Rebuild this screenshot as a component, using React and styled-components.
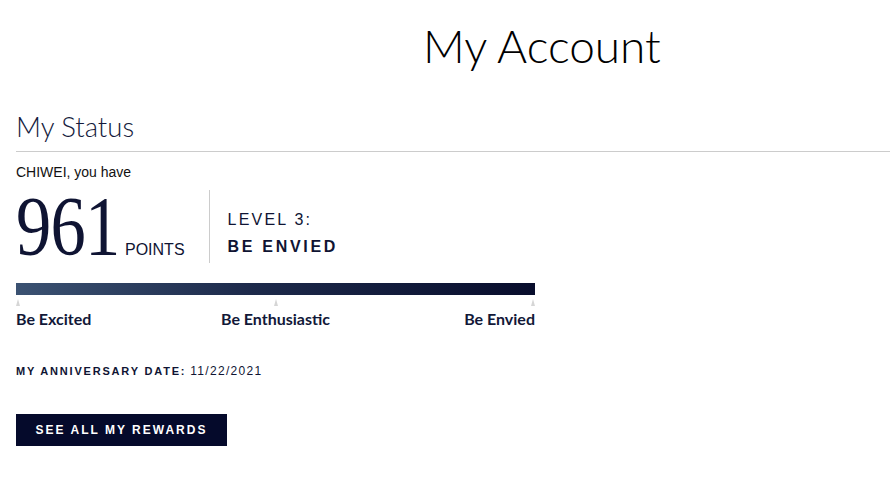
import React from "react";
import styled, { createGlobalStyle } from "styled-components";

const Global = createGlobalStyle`
  html, body { margin: 0; padding: 0; background: #fff; }
  body { font-family: "Liberation Sans", Arial, sans-serif; color: #0f1433; }
`;

const Page = styled.div`
  padding: 0 1px 40px 16px;
`;

const Title = styled.h1`
  margin: 23px 0 0 407px;
  font-family: Lato, "Open Sans", sans-serif;
  font-weight: 300;
  font-size: 46px;
  line-height: 46px;
  color: #000;
  letter-spacing: 0;
`;

const SectionHeading = styled.h2`
  margin: 44px 0 0;
  padding-bottom: 11px;
  border-bottom: 1px solid #cccccc;
  font-family: Lato, "Open Sans", sans-serif;
  font-weight: 300;
  font-size: 27.5px;
  line-height: 27px;
  color: #141a3c;
`;

const Greeting = styled.p`
  margin: 12px 0 0;
  font-size: 14px;
  line-height: 16px;
  color: #111;
`;

const PointsRow = styled.div`
  display: flex;
  margin-top: 10px;
  height: 73px;
`;

const PointsGroup = styled.div`
  display: flex;
  align-items: baseline;
  padding-right: 24px;
`;

const BigNumber = styled.span`
  display: inline-block;
  font-family: "Liberation Serif", "Times New Roman", serif;
  font-size: 84px;
  line-height: 73px;
  letter-spacing: -1px;
  color: #0f1433;
  transform: scaleX(0.84);
  transform-origin: left center;
  margin-right: -14px;
`;

const PointsLabel = styled.span`
  font-size: 16px;
  color: #0f1433;
`;

const LevelBlock = styled.div`
  border-left: 1px solid #cccccc;
  padding: 16px 0 0 18px;
  display: flex;
  flex-direction: column;
`;

const LevelLine = styled.span`
  font-size: 16px;
  line-height: 27px;
  font-weight: ${(p) => (p.$bold ? 700 : 400)};
  letter-spacing: ${(p) => (p.$bold ? "2.7px" : "2.2px")};
  color: #0f1433;
`;

const Track = styled.div`
  width: 519px;
  margin-top: 20px;
`;

const Bar = styled.div`
  height: 12px;
  background: linear-gradient(90deg, #3b5272 0%, #1d2a4b 45%, #080d2c 100%);
`;

const Milestones = styled.div`
  display: grid;
  grid-template-columns: 1fr 1fr 1fr;
  margin-top: 4px;
`;

const Milestone = styled.div`
  display: flex;
  flex-direction: column;
  align-items: ${(p) => p.$align};
`;

const Tick = styled.span`
  width: 0;
  height: 0;
  border-left: 2px solid transparent;
  border-right: 2px solid transparent;
  border-bottom: 7px solid #d6d6d6;
`;

const MilestoneLabel = styled.span`
  font-family: Lato, "Open Sans", sans-serif;
  font-weight: 700;
  font-size: 16px;
  line-height: 20px;
  margin-top: 3px;
  color: #121838;
  white-space: nowrap;
`;

const Anniversary = styled.p`
  margin: 35px 0 0;
  font-size: 11px;
  line-height: 14px;
  color: #0f1433;
`;

const AnnivLabel = styled.span`
  font-weight: 700;
  letter-spacing: 1.8px;
  margin-right: 4px;
`;

const AnnivDate = styled.span`
  font-size: 12px;
  letter-spacing: 1.3px;
`;

const RewardsButton = styled.button`
  display: block;
  margin-top: 36px;
  height: 32px;
  width: 211px;
  border: none;
  padding: 0;
  background: #050a2b;
  color: #fff;
  font-family: "Liberation Sans", Arial, sans-serif;
  font-weight: 700;
  font-size: 12px;
  letter-spacing: 2px;
  cursor: pointer;
`;

const milestones = [
  { label: "Be Excited", align: "flex-start" },
  { label: "Be Enthusiastic", align: "center" },
  { label: "Be Envied", align: "flex-end" },
];

export default function App() {
  return (
    <>
      <Global />
      <Page>
        <Title>My Account</Title>
        <SectionHeading>My Status</SectionHeading>
        <Greeting>CHIWEI, you have</Greeting>
        <PointsRow>
          <PointsGroup>
            <BigNumber>961</BigNumber>
            <PointsLabel>POINTS</PointsLabel>
          </PointsGroup>
          <LevelBlock>
            <LevelLine>LEVEL 3:</LevelLine>
            <LevelLine $bold>BE ENVIED</LevelLine>
          </LevelBlock>
        </PointsRow>
        <Track>
          <Bar />
          <Milestones>
            {milestones.map((m) => (
              <Milestone key={m.label} $align={m.align}>
                <Tick />
                <MilestoneLabel>{m.label}</MilestoneLabel>
              </Milestone>
            ))}
          </Milestones>
        </Track>
        <Anniversary>
          <AnnivLabel>MY ANNIVERSARY DATE:</AnnivLabel>
          <AnnivDate>11/22/2021</AnnivDate>
        </Anniversary>
        <RewardsButton>SEE ALL MY REWARDS</RewardsButton>
      </Page>
    </>
  );
}
